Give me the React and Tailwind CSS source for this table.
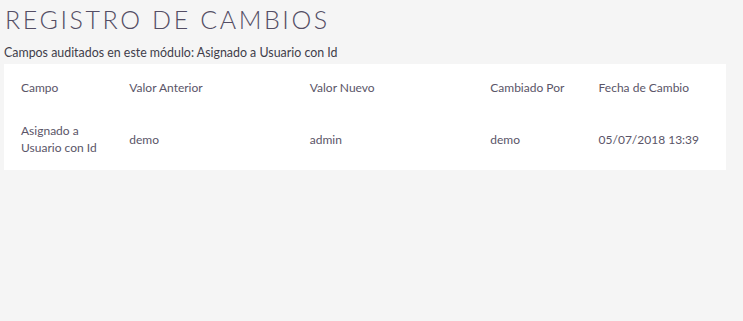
export default function App() {
  const rows = [
    {
      field: 'Asignado a Usuario con Id',
      before: 'demo',
      after: 'admin',
      by: 'demo',
      date: '05/07/2018 13:39',
    },
  ];

  return (
    <div className="min-h-[321px] bg-[#f5f5f5] font-['Lato',sans-serif] text-[#534d64]">
      <h2 className="pl-[5px] pt-[5px] text-[25px] font-light leading-[28px] tracking-[2.6px]">
        REGISTRO DE CAMBIOS
      </h2>
      <p className="mt-[12px] pl-[4px] text-[12.4px] leading-[16px] text-[#3f3d4a]">
        Campos auditados en este módulo: Asignado a Usuario con Id
      </p>
      <div className="mt-[3px] ml-[4px] w-[722px] bg-white">
        <table className="w-full table-fixed text-left text-[12px] leading-[17px] text-[#5a5568]">
          <colgroup>
            <col className="w-[15%]" />
            <col className="w-[25%]" />
            <col className="w-[25%]" />
            <col className="w-[15%]" />
            <col className="w-[20%]" />
          </colgroup>
          <thead>
            <tr className="h-[46px]">
              <th className="pl-[17px] pr-[6px] pt-[1px] font-normal">Campo</th>
              <th className="pl-[17px] pr-[6px] pt-[1px] font-normal">Valor Anterior</th>
              <th className="pl-[17px] pr-[6px] pt-[1px] font-normal">Valor Nuevo</th>
              <th className="pl-[17px] pr-[6px] pt-[1px] font-normal">Cambiado Por</th>
              <th className="pl-[17px] pr-[6px] pt-[1px] font-normal">Fecha de Cambio</th>
            </tr>
          </thead>
          <tbody>
            {rows.map((row, i) => (
              <tr key={i} className="h-[60px]">
                <td className="pl-[17px] pr-[6px] pb-[2px]">{row.field}</td>
                <td className="pl-[17px] pr-[6px] pb-[2px]">{row.before}</td>
                <td className="pl-[17px] pr-[6px] pb-[2px]">{row.after}</td>
                <td className="pl-[17px] pr-[6px] pb-[2px]">{row.by}</td>
                <td className="pl-[17px] pr-[6px] pb-[2px]">{row.date}</td>
              </tr>
            ))}
          </tbody>
        </table>
      </div>
    </div>
  );
}
